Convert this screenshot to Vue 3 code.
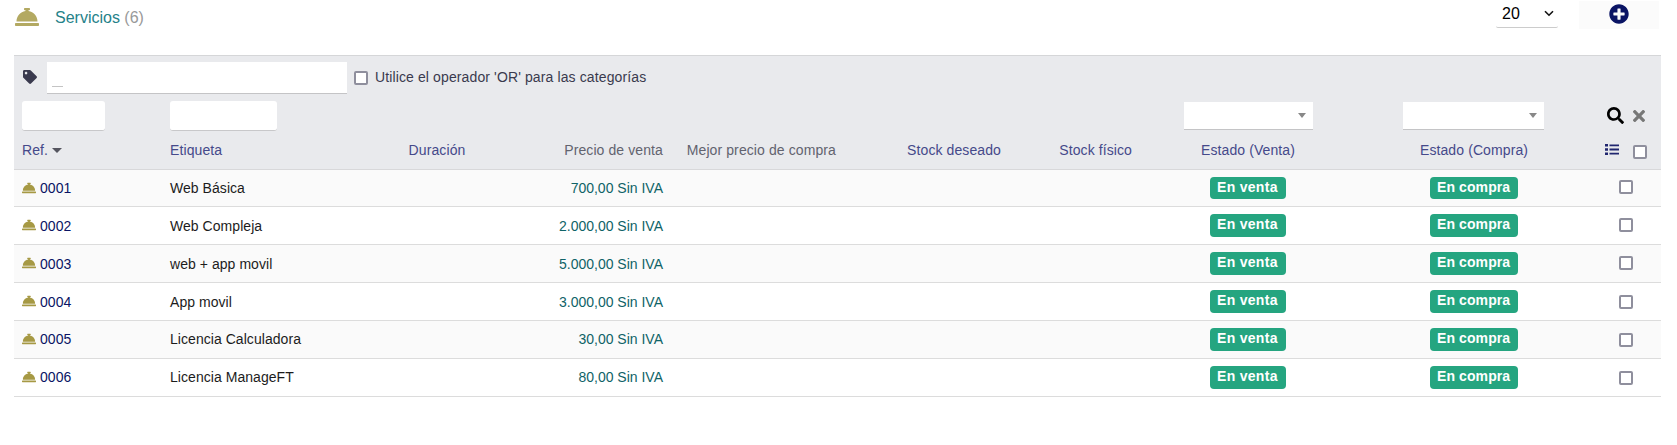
<script setup>
import { ref } from 'vue'

const bell =
  'M288 130.54V112h16c8.84 0 16-7.16 16-16V80c0-8.84-7.16-16-16-16h-96c-8.84 0-16 7.16-16 16v16c0 8.84 7.16 16 16 16h16v18.54C115.49 146.11 32 239.18 32 352h448c0-112.82-83.49-205.89-192-221.46zM496 384H16c-8.84 0-16 7.16-16 16v32c0 8.84 7.16 16 16 16h480c8.84 0 16-7.16 16-16v-32c0-8.84-7.16-16-16-16z'

const services = ref([
  { id: '0001', label: 'Web Básica', price: '700,00 Sin IVA' },
  { id: '0002', label: 'Web Compleja', price: '2.000,00 Sin IVA' },
  { id: '0003', label: 'web + app movil', price: '5.000,00 Sin IVA' },
  { id: '0004', label: 'App movil', price: '3.000,00 Sin IVA' },
  { id: '0005', label: 'Licencia Calculadora', price: '30,00 Sin IVA' },
  { id: '0006', label: 'Licencia ManageFT', price: '80,00 Sin IVA' },
])
</script>

<template>
  <div class="page">
    <header class="titlebar">
      <svg class="title-icon" viewBox="0 0 512 512"><path :d="bell" /></svg>
      <h1 class="title">Servicios <span class="count">(6)</span></h1>
      <div class="limit">
        <span>20</span>
        <svg class="chevron" viewBox="0 0 10 7"><path d="M1 1.2 5 5.2 9 1.2" /></svg>
      </div>
      <button class="add">
        <svg viewBox="0 0 512 512"><path d="M256 8C119 8 8 119 8 256s111 248 248 248 248-111 248-248S393 8 256 8zm144 276c0 6.600-5.400 12-12 12h-92v92c0 6.600-5.400 12-12 12h-56c-6.600 0-12-5.400-12-12v-92h-92c-6.600 0-12-5.400-12-12v-56c0-6.600 5.400-12 12-12h92v-92c0-6.600 5.400-12 12-12h56c6.600 0 12 5.400 12 12v92h92c6.600 0 12 5.400 12 12v56z" /></svg>
      </button>
    </header>

    <main class="table">
      <section class="head">
        <div class="categories">
          <svg class="tag" viewBox="0 0 512 512"><path d="M0 252.118V48C0 21.490 21.490 0 48 0h204.118a48 48 0 0 1 33.941 14.059l211.882 211.882c18.745 18.745 18.745 49.137 0 67.882L293.823 497.941c-18.745 18.745-49.137 18.745-67.882 0L14.059 286.059A48 48 0 0 1 0 252.118zM112 64c-26.510 0-48 21.490-48 48s21.490 48 48 48 48-21.490 48-48-21.490-48-48-48z" /></svg>
          <div class="category-input"><span class="caret"></span></div>
          <span class="check"></span>
          <span class="or-label">Utilice el operador 'OR' para las categorías</span>
        </div>

        <div class="grid filters">
          <div class="cell"><span class="input input-ref"></span></div>
          <div class="cell"><span class="input input-label"></span></div>
          <div class="cell sale-filter"><span class="combo combo-sale"></span></div>
          <div class="cell buy-filter"><span class="combo combo-buy"></span></div>
          <div class="cell filter-actions">
            <svg class="search" viewBox="0 0 512 512"><path d="M505 442.700L405.300 343c-4.500-4.500-10.600-7-17-7H372c27.600-35.300 44-79.700 44-128C416 93.100 322.900 0 208 0S0 93.100 0 208s93.100 208 208 208c48.300 0 92.700-16.400 128-44v16.300c0 6.400 2.500 12.500 7 17l99.700 99.700c9.400 9.400 24.600 9.400 33.900 0l28.300-28.300c9.400-9.400 9.400-24.600.1-34zM208 336c-70.700 0-128-57.200-128-128 0-70.700 57.200-128 128-128 70.700 0 128 57.200 128 128 0 70.700-57.200 128-128 128z" /></svg>
            <svg class="clear" viewBox="0 0 352 352"><path d="M242.720 176l100.070-100.070c12.280-12.280 12.280-32.190 0-44.480l-22.240-22.240c-12.280-12.280-32.190-12.280-44.480 0L176 109.280 75.930 9.210c-12.280-12.280-32.190-12.280-44.480 0L9.210 31.450c-12.280 12.280-12.280 32.190 0 44.480L109.280 176 9.210 276.070c-12.280 12.280-12.280 32.190 0 44.480l22.240 22.240c12.280 12.280 32.200 12.280 44.480 0L176 242.720l100.070 100.070c12.280 12.280 32.200 12.280 44.480 0l22.240-22.240c12.280-12.280 12.280-32.190 0-44.480L242.720 176z" /></svg>
          </div>
        </div>

        <div class="grid titles">
          <div class="cell">Ref.<span class="sort"></span></div>
          <div class="cell">Etiqueta</div>
          <div class="cell center">Duración</div>
          <div class="cell right plain">Precio de venta</div>
          <div class="cell right plain">Mejor precio de compra</div>
          <div class="cell right">Stock deseado</div>
          <div class="cell right">Stock físico</div>
          <div class="cell center">Estado (Venta)</div>
          <div class="cell center">Estado (Compra)</div>
          <div class="cell title-actions">
            <svg class="list" viewBox="0 0 14 11"><path d="M0 0h3v2.600H0zM0 4.200h3v2.600H0zM0 8.400h3V11H0zM4.500.4H14v1.900H4.500zM4.500 4.600H14v1.900H4.500zM4.500 8.700H14v1.900H4.500z" /></svg>
            <span class="check"></span>
          </div>
        </div>
      </section>

      <div v-for="s in services" :key="s.id" class="grid row">
        <div class="cell"><svg class="row-icon" viewBox="0 0 512 512"><path :d="bell" /></svg><a class="ref">{{ s.id }}</a></div>
        <div class="cell">{{ s.label }}</div>
        <div class="cell"></div>
        <div class="cell right amount">{{ s.price }}</div>
        <div class="cell"></div>
        <div class="cell"></div>
        <div class="cell"></div>
        <div class="cell center status"><span class="badge badge-sale">En venta</span></div>
        <div class="cell center status"><span class="badge badge-buy">En compra</span></div>
        <div class="cell select"><span class="check"></span></div>
      </div>
    </main>
  </div>
</template>

<style>
body {
  margin: 0;
  background: #fff;
}
</style>

<style scoped>
.page {
  box-sizing: border-box;
  height: 445px;
  padding: 0 16px 0 14px;
  overflow: hidden;
  font: 14px/18px "Liberation Sans", Arial, sans-serif;
  color: #1c1c1c;
}
.page * {
  box-sizing: border-box;
}
svg {
  display: block;
  flex: none;
}
.titlebar {
  display: flex;
  align-items: flex-start;
  height: 55px;
}
.title-icon {
  width: 24px;
  height: 24px;
  margin: 5px 16px 0 1px;
  fill: #b3a962;
}
.title {
  margin: 8px auto 0 0;
  font-size: 16px;
  line-height: 20px;
  font-weight: 400;
  color: #258289;
}
.count {
  color: #999;
}
.limit {
  display: flex;
  justify-content: space-between;
  width: 62px;
  height: 28px;
  padding: 4px 4px 0 6px;
  margin-right: 21px;
  border-bottom: 1px solid #ccc;
  border-radius: 2px;
  font-size: 16px;
  line-height: 20px;
  color: #000;
}
.chevron {
  width: 10px;
  height: 7px;
  margin-top: 6px;
  fill: none;
  stroke: #111;
  stroke-width: 1.6;
}
.add {
  display: flex;
  justify-content: center;
  width: 80px;
  height: 28px;
  margin: 1px 2px 0 0;
  padding: 3px 0 0;
  border: 0;
  background: #fbfbfb;
}
.add svg {
  width: 20px;
  height: 20px;
  fill: #0a1464;
}
.head {
  height: 115px;
  background: #e9eaed;
  border-top: 1px solid #d5d6d8;
  border-bottom: 1px solid #d8d8da;
}
.categories {
  display: flex;
  align-items: center;
  height: 45px;
  padding: 0 0 1px 9px;
}
.tag {
  width: 14px;
  height: 14px;
  margin: 0 10px 2px 0;
  fill: #3a3a4e;
}
.category-input {
  display: flex;
  align-items: flex-end;
  width: 300px;
  height: 32px;
  padding: 0 5px 6px;
  background: #fff;
  border-bottom: 1px solid #c4c4c6;
}
.caret {
  width: 11px;
  height: 1px;
  background: #c4c4c4;
}
.check {
  display: block;
  flex: none;
  width: 14px;
  height: 14px;
  border: 2px solid #8f8f9d;
  border-radius: 2px;
  background: #fff;
}
.categories .check {
  margin: 0 7px;
}
.or-label {
  margin-bottom: 2px;
  letter-spacing: 0.12px;
  color: #3a3a4e;
}
.grid {
  display: grid;
  grid-template-columns: 148px 218px 114px 177px 173px 165px 131px 216px 236px 69px;
}
.cell {
  display: flex;
  align-items: center;
  padding: 0 8px;
  white-space: nowrap;
}
.right {
  justify-content: flex-end;
}
.center {
  justify-content: center;
}
.filters {
  height: 30px;
}
.input {
  height: 30px;
  background: #fff;
  border-bottom: 1px solid #c8c8ca;
  border-radius: 3px;
}
.input-ref {
  width: 83px;
}
.input-label {
  width: 107px;
}
.sale-filter {
  grid-column: 8;
  justify-content: center;
}
.buy-filter {
  grid-column: 9;
  justify-content: center;
}
.combo {
  display: flex;
  flex: none;
  align-items: center;
  justify-content: flex-end;
  height: 28px;
  padding-right: 7px;
  background: #fff;
  border-bottom: 1px solid #c4c4c6;
}
.combo::after {
  content: "";
  border: 4px solid transparent;
  border-top: 5px solid #888;
  border-bottom: 0;
}
.combo-sale {
  width: 129px;
  margin-left: 1px;
}
.combo-buy {
  width: 141px;
  margin-right: 1px;
}
.filter-actions {
  grid-column: 10;
  gap: 9px;
  padding: 0 0 1px 15px;
}
.search {
  width: 17px;
  height: 17px;
  fill: #000;
}
.clear {
  width: 12px;
  height: 12px;
  fill: #777;
}
.titles {
  height: 38px;
  letter-spacing: 0.1px;
  color: #45498a;
}
.plain {
  color: #62636f;
}
.sort {
  margin-left: 4px;
  border: 5px solid transparent;
  border-top: 5px solid #55555f;
  border-bottom: 0;
}
.title-actions {
  gap: 14px;
  padding: 0 0 1px 13px;
}
.title-actions .check {
  margin-top: 5px;
}
.list {
  width: 14px;
  height: 11px;
  fill: #20266f;
}
.row {
  height: 38px;
  border-bottom: 1px solid #dcdcdc;
  letter-spacing: 0.05px;
}
.row:nth-child(2) {
  height: 37px;
}
.row:nth-child(even) {
  background: #fafafa;
}
.row:nth-child(n + 6) .cell:not(.status, .select) {
  padding-bottom: 1px;
}
.row-icon {
  width: 14px;
  height: 14px;
  margin: 0 4px 1px 0;
  fill: #a69944;
}
.ref {
  color: #0a1464;
}
.amount {
  letter-spacing: 0;
  color: #0f6367;
}
.badge {
  height: 23px;
  padding-left: 7px;
  border-radius: 4px;
  background: #25a580;
  color: #fff;
  font-weight: 700;
  line-height: 21px;
}
.badge-sale {
  width: 76px;
  letter-spacing: 0.3px;
}
.badge-buy {
  width: 88px;
  letter-spacing: 0.1px;
}
.row:nth-child(2) .badge {
  height: 22px;
}
.select {
  align-items: flex-start;
  padding: 11px 0 0 27px;
}
.row:nth-child(2) .select {
  padding-top: 10px;
}
.row:nth-child(n + 5) .select {
  padding-top: 12px;
}
</style>
